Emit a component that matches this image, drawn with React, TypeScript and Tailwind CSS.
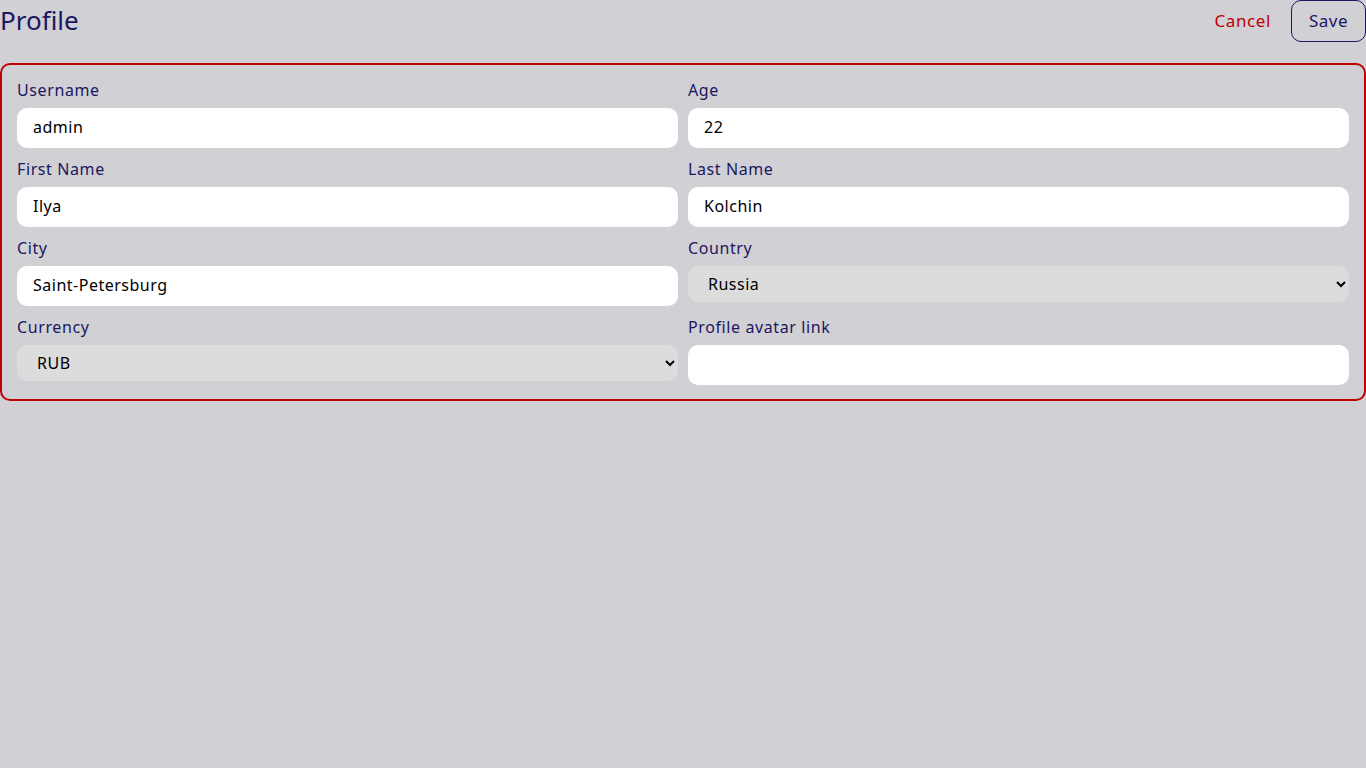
import React from "react";

const font = { fontFamily: '"Noto Sans", "DejaVu Sans", sans-serif' };

function Field({ label, children }: { label: string; children: React.ReactNode }) {
  return (
    <div className="flex flex-col gap-[8px]">
      <label className="h-[21px] pt-[1px] leading-[21px] tracking-[0.6px] text-[16px] text-[#1b1760]">{label}</label>
      {children}
    </div>
  );
}

function TextInput({ value }: { value: string }) {
  return (
    <input
      defaultValue={value}
      className="h-[40px] w-full rounded-[10px] bg-white px-4 pb-[2px] tracking-[0.5px] text-[16px] text-black outline-none"
    />
  );
}

function Select({ value, options }: { value: string; options: string[] }) {
  return (
    <select
      defaultValue={value}
      className="h-[36px] w-full rounded-[10px] bg-[#dcdcdc] pl-4 pr-2 tracking-[0.5px] text-[16px] text-black outline-none"
    >
      {options.map((o) => (
        <option key={o}>{o}</option>
      ))}
    </select>
  );
}

export default function App() {
  return (
    <div className="min-h-[768px] w-full bg-[#d1d0d5]" style={font}>
      <div className="flex h-[42px] items-center justify-between">
        <h1 className="pb-[2px] text-[26px] leading-[38px] text-[#1b1760]">Profile</h1>
        <div className="flex h-full items-center gap-[20px]">
          <button className="pb-[1px] tracking-[0.6px] text-[17px] text-[#c00000]">Cancel</button>
          <button className="h-[42px] w-[75px] rounded-[10px] border border-[#1b1760] pb-[1px] tracking-[0.5px] text-[17px] text-[#1b1760]">
            Save
          </button>
        </div>
      </div>
      <div className="mt-[21px] rounded-[10px] border-2 border-[#c00000] px-[15px] py-[14px]">
        <div className="grid grid-cols-2 gap-x-[10px] gap-y-[10px]">
          <Field label="Username">
            <TextInput value="admin" />
          </Field>
          <Field label="Age">
            <TextInput value="22" />
          </Field>
          <Field label="First Name">
            <TextInput value="Ilya" />
          </Field>
          <Field label="Last Name">
            <TextInput value="Kolchin" />
          </Field>
          <Field label="City">
            <TextInput value="Saint-Petersburg" />
          </Field>
          <Field label="Country">
            <Select value="Russia" options={["Russia", "Belarus", "Ukraine", "Kazakhstan", "Armenia"]} />
          </Field>
          <Field label="Currency">
            <Select value="RUB" options={["RUB", "EUR", "USD"]} />
          </Field>
          <Field label="Profile avatar link">
            <TextInput value="" />
          </Field>
        </div>
      </div>
    </div>
  );
}
